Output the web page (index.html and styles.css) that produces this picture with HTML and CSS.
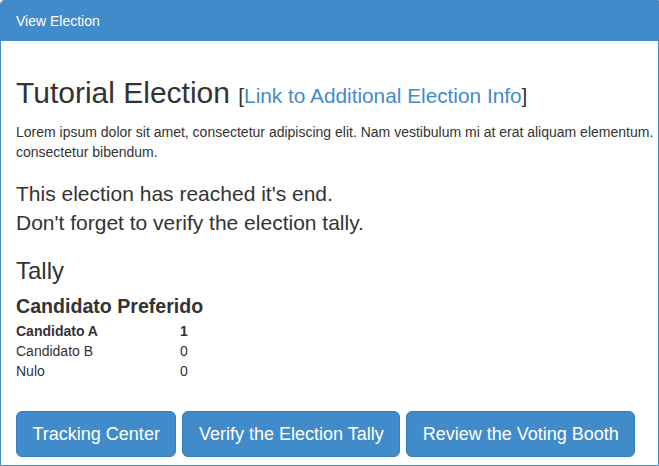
FILE: index.html
```html
<!DOCTYPE html>
<html>
<head>
<meta charset="utf-8">
<link rel="stylesheet" href="styles.css">
</head>
<body>
<div class="panel">
  <div class="panel-heading">View Election</div>
  <div class="panel-body">
    <h2 class="title">Tutorial Election <small class="info">[<a href="#">Link to Additional Election Info</a>]</small></h2>
    <p class="desc">Lorem ipsum dolor sit amet, consectetur adipiscing elit. Nam vestibulum mi at erat aliquam elementum. consectetur bibendum.</p>
    <p class="lead">This election has reached it's end.<br>Don't forget to verify the election tally.</p>
    <h3 class="tally">Tally</h3>
    <h4 class="question">Candidato Preferido</h4>
    <div class="results">
      <div class="row winner"><span class="name">Candidato A</span><span class="count">1</span></div>
      <div class="row"><span class="name">Candidato B</span><span class="count">0</span></div>
      <div class="row"><span class="name">Nulo</span><span class="count">0</span></div>
    </div>
    <div class="actions">
      <a class="btn" href="#">Tracking Center</a>
      <a class="btn" href="#">Verify the Election Tally</a>
      <a class="btn" href="#">Review the Voting Booth</a>
    </div>
  </div>
</div>
</body>
</html>
```

FILE: styles.css
```css
html, body {
  margin: 0;
  padding: 0;
  background: #fff;
}
body {
  font-family: "Liberation Sans", Arial, Helvetica, sans-serif;
  font-size: 14px;
  line-height: 20px;
  color: #333;
  overflow: hidden;
}
.panel {
  border: 1px solid #428bca;
  border-radius: 4px 0 0 0;
  height: 464px;
  overflow: hidden;
}
.panel-heading {
  background: #428bca;
  color: #fff;
  font-size: 14px;
  line-height: 20px;
  margin: -1px -1px 0 -1px;
  border-radius: 4px 0 0 0;
  padding: 11px 15px 10px 16px;
}
.panel-body {
  padding: 15px 15px 8px 15px;
}
.title {
  font-size: 30px;
  font-weight: 500;
  line-height: 33px;
  margin: 20px 0 10px 0;
  white-space: nowrap;
}
.info {
  font-size: 20.8px;
  font-weight: 400;
  color: #333;
}
.info a {
  color: #428bca;
  text-decoration: none;
}
.desc {
  margin: 0 -16px 10px 0;
}
.lead {
  font-size: 21px;
  line-height: 29px;
  margin: 17px 0 0 0;
}
.tally {
  font-size: 24px;
  font-weight: 500;
  line-height: 26.4px;
  margin: 21px 0 0 0;
}
.question {
  font-size: 19.6px;
  font-weight: 700;
  line-height: 19.8px;
  margin: 13px 0 0 0;
}
.results {
  margin-top: 4px;
}
.row {
  display: grid;
  grid-template-columns: 164px auto;
  line-height: 20px;
}
.winner {
  font-weight: 700;
}
.actions {
  display: flex;
  gap: 6px;
  margin-top: 30px;
}
.btn {
  display: block;
  background: #428bca;
  border: 1px solid #357ebd;
  border-radius: 6px;
  color: #fff;
  font-size: 18px;
  line-height: 24px;
  padding: 10px 15.5px;
  text-decoration: none;
  white-space: nowrap;
}
```
